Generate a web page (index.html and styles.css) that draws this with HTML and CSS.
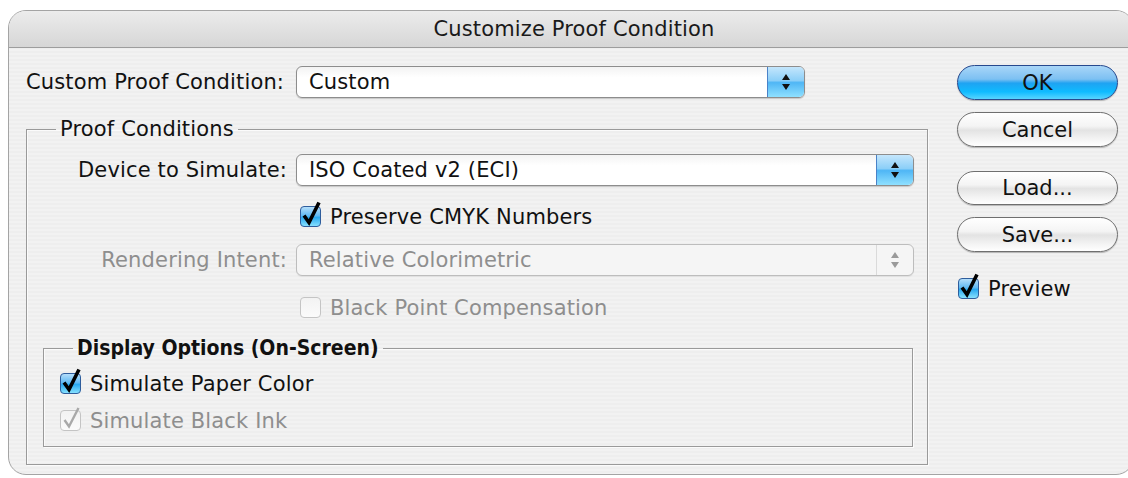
FILE: index.html
```html
<!DOCTYPE html>
<html lang="en">
<head>
<meta charset="utf-8">
<title>Customize Proof Condition</title>
<link rel="stylesheet" href="styles.css">
</head>
<body>
<div class="window">
  <div class="titlebar">Customize Proof Condition</div>
  <div class="content">
    <div class="main">
      <div class="top-row">
        <span class="label">Custom Proof Condition:</span>
        <div class="popup">
          <span class="value">Custom</span>
          <span class="arrows"><svg width="12" height="20" viewBox="0 0 12 20"><path d="M6 2 L10 8 L2 8 Z M2 12 L10 12 L6 18 Z"/></svg></span>
        </div>
      </div>

      <fieldset class="group proof">
        <legend>Proof Conditions</legend>

        <div class="field-row first">
          <span class="label">Device to Simulate:</span>
          <div class="popup">
            <span class="value">ISO Coated v2 (ECI)</span>
            <span class="arrows"><svg width="12" height="20" viewBox="0 0 12 20"><path d="M6 2 L10 8 L2 8 Z M2 12 L10 12 L6 18 Z"/></svg></span>
          </div>
        </div>

        <label class="check indent preserve">
          <svg class="box" width="24" height="27" viewBox="0 0 24 27"><use href="#cb-on"/></svg>
          <span>Preserve CMYK Numbers</span>
        </label>

        <div class="field-row disabled rendering">
          <span class="label">Rendering Intent:</span>
          <div class="popup">
            <span class="value">Relative Colorimetric</span>
            <span class="arrows"><svg width="12" height="20" viewBox="0 0 12 20"><path d="M6 2 L10 8 L2 8 Z M2 12 L10 12 L6 18 Z"/></svg></span>
          </div>
        </div>

        <label class="check indent disabled bpc">
          <svg class="box" width="24" height="27" viewBox="0 0 24 27"><use href="#cb-off-dim"/></svg>
          <span>Black Point Compensation</span>
        </label>

        <fieldset class="group display">
          <legend>Display Options (On-Screen)</legend>
          <label class="check paper">
            <svg class="box" width="24" height="27" viewBox="0 0 24 27"><use href="#cb-on"/></svg>
            <span>Simulate Paper Color</span>
          </label>
          <label class="check disabled ink">
            <svg class="box" width="24" height="27" viewBox="0 0 24 27"><use href="#cb-on-dim"/></svg>
            <span>Simulate Black Ink</span>
          </label>
        </fieldset>
      </fieldset>
    </div>

    <div class="side">
      <button class="btn default">OK</button>
      <button class="btn cancel">Cancel</button>
      <button class="btn load">Load...</button>
      <button class="btn save">Save...</button>
      <label class="check preview">
        <svg class="box" width="24" height="27" viewBox="0 0 24 27"><use href="#cb-on"/></svg>
        <span>Preview</span>
      </label>
    </div>
  </div>
</div>

<svg class="defs" width="0" height="0">
  <defs>
    <linearGradient id="aqua" x1="0" y1="0" x2="0" y2="1">
      <stop offset="0" stop-color="#b9e0fb"/>
      <stop offset="0.45" stop-color="#62b9f2"/>
      <stop offset="0.55" stop-color="#2aa9f0"/>
      <stop offset="1" stop-color="#8be4ff"/>
    </linearGradient>
    <linearGradient id="dim" x1="0" y1="0" x2="0" y2="1">
      <stop offset="0" stop-color="#f2f2f2"/>
      <stop offset="1" stop-color="#fbfbfb"/>
    </linearGradient>
    <g id="cb-on">
      <rect x="1.5" y="5.5" width="20" height="20" rx="3.5" fill="url(#aqua)" stroke="#2f5d9c"/>
      <path d="M5 14.5 L10 21.5 L20 1.5" fill="none" stroke="#000" stroke-width="3.6" stroke-linejoin="miter"/>
    </g>
    <g id="cb-off-dim">
      <rect x="1.5" y="5.5" width="20" height="20" rx="3.5" fill="url(#dim)" stroke="#c4c4c4"/>
    </g>
    <g id="cb-on-dim">
      <rect x="1.5" y="5.5" width="20" height="20" rx="3.5" fill="url(#dim)" stroke="#c4c4c4"/>
      <path d="M5.5 15 L10 21.5 L19.5 3" fill="none" stroke="#a9a9a9" stroke-width="2.4"/>
    </g>
  </defs>
</svg>
</body>
</html>
```

FILE: styles.css
```css
html, body {
  margin: 0;
  padding: 0;
  background: #ffffff;
  overflow: hidden;
}

body {
  font-family: "DejaVu Sans", "Liberation Sans", sans-serif;
  font-size: 21px;
  letter-spacing: 0.15px;
  color: #111;
}

.defs {
  position: absolute;
  width: 0;
  height: 0;
}

/* dialog window */
.window {
  margin: 10px 0 0 8px;
  width: 1126px;
  height: 465px;
  box-sizing: border-box;
  border: 1px solid #a4a4a4;
  border-radius: 18px;
  overflow: hidden;
  display: flex;
  flex-direction: column;
  background: repeating-linear-gradient(to bottom, #eeeeee 0, #eeeeee 2px, #f2f2f2 2px, #f2f2f2 4px);
}

.titlebar {
  flex: none;
  height: 36px;
  line-height: 37px;
  padding-left: 6px;
  text-align: center;
  border-bottom: 1px solid #9d9d9d;
  background: linear-gradient(#ececec, #d6d6d6);
  color: #1a1a1a;
}

.content {
  display: grid;
  grid-template-columns: 902px 161px;
  column-gap: 29px;
  padding: 18px 0 0 17px;
  align-items: start;
}

/* labels + popups */
.label {
  line-height: 32px;
  white-space: nowrap;
}

.top-row {
  display: grid;
  grid-template-columns: 261px 509px;
  column-gap: 9px;
  height: 32px;
}

.popup {
  display: flex;
  height: 32px;
  box-sizing: border-box;
  border: 1px solid #8d8d8d;
  border-radius: 6px;
  background: linear-gradient(#f3f3f3, #ffffff 35%, #ffffff 100%);
  box-shadow: 0 1px 1px rgba(0, 0, 0, 0.18);
  overflow: hidden;
}

.popup .value {
  flex: 1;
  padding-left: 12px;
  line-height: 30px;
  white-space: nowrap;
}

.popup .arrows {
  flex: none;
  width: 36px;
  display: flex;
  align-items: center;
  justify-content: center;
  border-left: 1px solid #4a82c8;
  background: linear-gradient(#c4e6fc 0%, #8ccff8 45%, #4fb6f5 52%, #8fe0ff 100%);
}

.popup .arrows svg {
  fill: #111;
}

/* group boxes */
.group {
  margin: 0;
  padding: 0;
  min-width: 0;
  border: 1px solid #9a9a9a;
  box-shadow: inset 1px 1px 0 #fbfbfb, 1px 1px 0 #fbfbfb;
}

.group legend {
  margin-left: 29px;
  padding: 0 4px;
  line-height: 24px;
}

.proof {
  margin-top: 19px;
  height: 348px;
  box-sizing: border-box;
}

.display {
  margin: 16px 14px 0 16px;
  height: 111px;
  box-sizing: border-box;
}

.display legend {
  font-family: "DejaVu Sans Condensed", "DejaVu Sans", sans-serif;
  font-weight: bold;
  letter-spacing: 0;
}

.field-row {
  display: grid;
  grid-template-columns: 260px 618px;
  column-gap: 9px;
  height: 32px;
}

.field-row .label {
  text-align: right;
}

.field-row.first {
  margin-top: 13px;
}

.field-row.rendering {
  margin-top: 15px;
}

.disabled {
  color: #8e8e8e;
}

.field-row.disabled .popup {
  border-color: #bdbdbd;
  background: #f5f5f5;
  box-shadow: 0 1px 1px rgba(0, 0, 0, 0.06);
}

.field-row.disabled .arrows {
  background: transparent;
  border-left: 1px solid #dadada;
}

.field-row.disabled .arrows svg {
  fill: #9a9a9a;
}

/* checkboxes */
.check {
  display: flex;
  align-items: center;
  gap: 7px;
  height: 24px;
  white-space: nowrap;
}

.check .box {
  flex: none;
  margin-top: -6px;
}

.indent {
  padding-left: 272px;
}

.preserve {
  margin-top: 19px;
}

.bpc {
  margin-top: 20px;
}

.paper {
  margin-top: 12px;
  padding-left: 15px;
}

.ink {
  margin-top: 13px;
  padding-left: 15px;
}

/* push buttons */
.side {
  display: flex;
  flex-direction: column;
  margin-top: -1px;
}

.btn {
  height: 35px;
  width: 161px;
  padding: 0;
  border: 1px solid #6f6f6f;
  border-radius: 18px;
  font: inherit;
  color: #111;
  line-height: 32px;
  background: linear-gradient(#ffffff 0%, #f4f4f4 40%, #e3e3e3 52%, #f3f3f3 78%, #ffffff 100%);
  box-shadow: 0 1px 1px rgba(0, 0, 0, 0.25);
}

.btn.default {
  border-color: #27498e;
  background: linear-gradient(#a9d6f8 0%, #7cc0f2 40%, #1fa3f2 52%, #0fbbff 78%, #58d4ff 100%);
}

.btn.cancel {
  margin-top: 12px;
}

.btn.load {
  margin-top: 24px;
  height: 34px;
}

.btn.save {
  margin-top: 12px;
}

.preview {
  margin-top: 25px;
}
```
